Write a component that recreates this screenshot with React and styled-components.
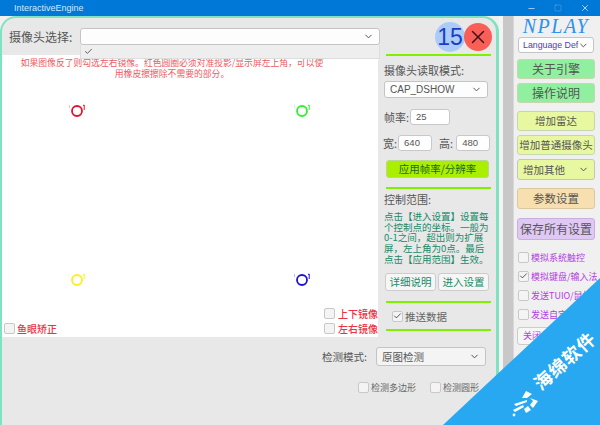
import React from 'react';
import styled, { createGlobalStyle } from 'styled-components';
import { Check, ChevronDown, X, Minus, Square } from 'lucide-react';

const CJK = '"Noto Sans CJK SC", "Noto Sans", sans-serif';

const GlobalStyle = createGlobalStyle`
    html, body { margin: 0; padding: 0; background: #f0f0f0; }
    * { box-sizing: border-box; }
`;

const Screen = styled.div`
    position: relative;
    width: 600px;
    height: 425px;
    overflow: hidden;
    display: flex;
    flex-direction: column;
    font-family: ${CJK};
    color: #555;
    background: #f0f0f0;
`;

const TitleBar = styled.div`
    height: 16px;
    flex: none;
    background: #0078d7;
    color: #d5e8f8;
    display: flex;
    align-items: center;
    padding-left: 14px;
    font: 9px "Liberation Sans", sans-serif;
`;

const TitleText = styled.span`
    flex: 1;
`;

const WinButtons = styled.div`
    display: flex;
    width: 90px;
    justify-content: space-between;
    align-items: center;
    padding: 0 10px 0 17px;
    color: #cfe4f6;
`;

const Body = styled.div`
    flex: 1;
    display: flex;
    min-height: 0;
`;

const MainPanel = styled.div`
    width: 499px;
    flex: none;
    border: 3px solid #7fe2c0;
    border-width: 2px 3px 0 2px;
    border-radius: 16px 16px 0 0;
    background: #e8e8e8;
    overflow: hidden;
    display: flex;
    flex-direction: column;
`;

const UpperRow = styled.div`
    display: flex;
    height: 319px;
    flex: none;
`;

const LeftCol = styled.div`
    width: 376px;
    flex: none;
    display: flex;
    flex-direction: column;
`;

const CameraBar = styled.div`
    position: relative;
    height: 37px;
    flex: none;
    display: flex;
    align-items: flex-start;
    padding: 10px 0 0 7px;
    gap: 8px;
`;

const CameraLabel = styled.span`
    font-size: 12px;
    line-height: 17px;
    color: #555;
    white-space: nowrap;
`;

const SelectBox = styled.div`
    display: flex;
    align-items: center;
    justify-content: space-between;
    width: ${p => p.$w}px;
    height: ${p => p.$h}px;
    margin-top: ${p => p.$mt || 0}px;
    margin-left: ${p => p.$ml || 0}px;
    padding: 0 ${p => p.$pad ?? 5}px;
    font-family: ${p => p.$latin ? '"Liberation Sans", sans-serif' : 'inherit'};
    font-size: ${p => p.$fs || 11}px;
    color: ${p => p.$color || '#555'};
    background: ${p => p.$bg || '#fdfdfd'};
    border: 1px solid #c4c4c4;
    border-radius: 3px;
    white-space: nowrap;
    flex: none;
`;

const CameraMenu = styled.div`
    position: absolute;
    left: 78px;
    top: 27px;
    width: 300px;
    height: 14px;
    background: #eee;
    border: 1px solid #ddd;
    border-top: 0;
    padding-left: 3px;
    color: #333;
    display: flex;
    align-items: center;
    z-index: 2;
`;

const Canvas = styled.div`
    position: relative;
    flex: 1;
    background: #fff;
    display: flex;
    flex-direction: column;
    justify-content: space-between;
`;

const Hint = styled.div`
    font-size: 8.8px;
    line-height: 11px;
    color: #ee5a5f;
    text-align: center;
    padding: 2px 53px 0 17px;
`;

const MarkerPin = styled.svg`
    position: absolute;
    left: ${p => p.$x}px;
    top: ${p => p.$y}px;
`;

const CanvasFooter = styled.div`
    display: flex;
    justify-content: space-between;
    align-items: flex-end;
    padding: 0 0 2px 2px;
`;

const MirrorCol = styled.div`
    display: flex;
    flex-direction: column;
    gap: 1px;
`;

const CheckRow = styled.label`
    display: flex;
    align-items: center;
    gap: ${p => p.$gap ?? 2}px;
    margin-left: ${p => p.$ml || 0}px;
    height: 14px;
    font-size: ${p => p.$fs || 9}px;
    font-weight: ${p => p.$bold ? 500 : 400};
    color: ${p => p.$color || '#666'};
    white-space: nowrap;
`;

const Tick = styled.span`
    width: 11px;
    height: 11px;
    flex: none;
    background: #f4f4f4;
    border: 1px solid #c8c8c8;
    border-radius: 2px;
    display: flex;
    align-items: center;
    justify-content: center;
    color: #222;
`;

const RightCol = styled.div`
    flex: 1;
    min-width: 0;
    display: flex;
    flex-direction: column;
    padding: 0 5px 0 6px;
`;

const BadgeRow = styled.div`
    height: 36px;
    flex: none;
    display: flex;
    justify-content: flex-end;
    align-items: flex-start;
    padding: 4px 0 0;
    margin-right: -1px;
`;

const Counter = styled.div`
    width: 30px;
    height: 30px;
    border-radius: 50%;
    background: #aaccf6;
    color: #1a3fc4;
    font: 23px/30px "Liberation Sans", sans-serif;
    text-align: center;
`;

const CloseBall = styled.div`
    width: 28px;
    height: 28px;
    margin: 1px 0 0 -1px;
    border-radius: 50%;
    background: #fa5f57;
    color: #401018;
    display: flex;
    align-items: center;
    justify-content: center;
`;

const Divider = styled.div`
    height: 2px;
    flex: none;
    margin: ${p => p.$mt || 0}px 0 ${p => p.$mb || 0}px 2px;
    background: #80f000;
`;

const SectionLabel = styled.div`
    font-size: 11px;
    line-height: 14px;
    color: #555;
    white-space: nowrap;
`;

const FieldRow = styled.div`
    display: flex;
    align-items: center;
    height: 16px;
    margin-top: ${p => p.$mt || 0}px;
    margin-left: ${p => p.$ml || 0}px;
    font-size: 11px;
    color: #555;
    white-space: nowrap;
`;

const FieldGap = styled.span`
    margin-left: 7px;
`;

const NumberInput = styled.div`
    width: ${p => p.$w}px;
    height: 16px;
    margin-left: ${p => p.$ml || 1}px;
    padding-left: 5px;
    font: 9.5px/14px "Liberation Sans", sans-serif;
    color: #555;
    background: #fff;
    border: 1px solid #c8c8c8;
    border-radius: 3px;
`;

const ApplyButton = styled.div`
    height: 18px;
    flex: none;
    margin: 9px 2px 0 2px;
    background: #aaee00;
    border: 1px solid #b8d890;
    border-radius: 3px;
    color: #206a20;
    font-size: 10.5px;
    line-height: 16px;
    text-align: center;
`;

const HelpText = styled.div`
    margin-top: 5px;
    font-size: 9.5px;
    line-height: 10.7px;
    color: #208a68;
    height: 62px;
`;

const ButtonPair = styled.div`
    display: flex;
    gap: 2px;
    margin: 0 2px 0 1px;
`;

const GhostButton = styled.div`
    flex: 1;
    height: 18px;
    background: #f6f6f6;
    border: 1px solid #ccc;
    border-radius: 3px;
    color: #208a68;
    font-size: 10.5px;
    line-height: 16px;
    text-align: center;
`;

const LowerArea = styled.div`
    flex: 1;
    display: flex;
    flex-direction: column;
    align-items: flex-end;
    padding: 10px 10px 0 0;
`;

const ModeRow = styled.div`
    display: flex;
    align-items: center;
    gap: 9px;
    font-size: 10.5px;
    color: #555;
`;

const DetectRow = styled.div`
    display: flex;
    gap: 14px;
    margin: 14px 7px 0 0;
`;

const Gutter = styled.div`
    width: 4px;
    flex: none;
    background: #f4f4f4;
`;

const ScrollTrack = styled.div`
    width: 10px;
    flex: none;
    background: #c8c8c8;
`;

const Sidebar = styled.div`
    flex: 1;
    min-width: 0;
    display: flex;
    flex-direction: column;
    padding: 0 5px 0 3px;
    border-left: 1px solid #d8d8d8;
`;

const Brand = styled.div`
    height: 21px;
    flex: none;
    text-align: center;
    font: italic 400 20px/21px "Liberation Serif", serif;
    letter-spacing: 1.5px;
    color: #2a92f0;
`;

const SideButton = styled.div`
    height: ${p => p.$h || 20}px;
    flex: none;
    margin-top: ${p => p.$mt || 0}px;
    background: ${p => p.$bg};
    border: 1px solid ${p => p.$line || '#c6d6b0'};
    border-radius: 3px;
    font-size: ${p => p.$fs || 12}px;
    line-height: ${p => (p.$h || 20) - 2}px;
    color: #555;
    text-align: center;
    white-space: nowrap;
`;

const SideChecks = styled.div`
    display: flex;
    flex-direction: column;
    gap: 5px;
    margin: 10px 0 0 1px;
`;

const StopButton = styled.div`
    height: 18px;
    flex: none;
    margin-top: 6px;
    padding-left: 5px;
    background: #f6f6f6;
    border: 1px solid #ccc;
    border-radius: 3px;
    color: #b040e0;
    font-size: 9px;
    line-height: 16px;
`;

const Ribbon = styled.div`
    position: absolute;
    inset: 0;
    background: #27a8f0;
    clip-path: polygon(443px 425px, 600px 278px, 600px 425px);
    z-index: 5;
`;

const RibbonText = styled.div`
    position: absolute;
    left: 526px;
    top: 350px;
    width: 76px;
    text-align: center;
    transform: rotate(-42deg);
    font-size: 18px;
    line-height: 20px;
    font-weight: 700;
    letter-spacing: 1px;
    color: #fff;
    white-space: nowrap;
    z-index: 6;
`;

const RibbonLogo = styled.svg`
    position: absolute;
    left: 510px;
    top: 388px;
    z-index: 6;
`;

const Marker = ({ x, y, color }) => (
    <MarkerPin $x={x} $y={y} width="20" height="20" viewBox="0 0 20 20">
        <circle cx="10" cy="11" r="5" fill="none" stroke={color} strokeWidth="1.8" />
        <path d="M16 5.5 L17.2 5 V10" fill="none" stroke={color} strokeWidth="1" />
        <path d="M2.5 5 V8" stroke={color} strokeOpacity="0.35" strokeWidth="0.8" />
    </MarkerPin>
);

const CheckItem = ({ checked, children, ...rest }) => (
    <CheckRow {...rest}>
        <Tick>{checked && <Check size={10} strokeWidth={2} />}</Tick>
        {children}
    </CheckRow>
);

const Chevron = () => <ChevronDown size={11} strokeWidth={2} color="#444" />;

const App = () => {
    return (
        <Screen>
            <GlobalStyle />
            <TitleBar>
                <TitleText>InteractiveEngine</TitleText>
                <WinButtons>
                    <Minus size={9} />
                    <Square size={8} strokeOpacity={0.35} />
                    <X size={10} />
                </WinButtons>
            </TitleBar>
            <Body>
                <MainPanel>
                    <UpperRow>
                        <LeftCol>
                            <CameraBar>
                                <CameraLabel>摄像头选择:</CameraLabel>
                                <SelectBox $w={300} $h={17}><span /><Chevron /></SelectBox>
                                <CameraMenu><Check size={9} strokeWidth={2} /></CameraMenu>
                            </CameraBar>
                            <Canvas>
                                <Hint>{'如果图像反了则勾选左右镜像。红色圆圈必须对准投影/显示屏左上角\uFF0C可以使用橡皮擦擦除不需要的部分。'}</Hint>
                                <Marker x={65} y={45} color="#e81030" />
                                <Marker x={290} y={45} color="#30f030" />
                                <Marker x={65} y={214} color="#f8f020" />
                                <Marker x={290} y={214} color="#2010d0" />
                                <CanvasFooter>
                                    <CheckItem $fs={10} $bold $color="#f03040">鱼眼矫正</CheckItem>
                                    <MirrorCol>
                                        <CheckItem $fs={10} $gap={3} $bold $color="#f03040">上下镜像</CheckItem>
                                        <CheckItem $fs={10} $gap={3} $bold $color="#f03040">左右镜像</CheckItem>
                                    </MirrorCol>
                                </CanvasFooter>
                            </Canvas>
                        </LeftCol>
                        <RightCol>
                            <BadgeRow>
                                <Counter>15</Counter>
                                <CloseBall><X size={22} strokeWidth={1.6} /></CloseBall>
                            </BadgeRow>
                            <Divider $mb={7} />
                            <SectionLabel>摄像头读取模式:</SectionLabel>
                            <SelectBox $w={104} $h={17} $fs={10} $mt={4} $latin>CAP_DSHOW<Chevron /></SelectBox>
                            <FieldRow $mt={11}>帧率:<NumberInput $w={40}>25</NumberInput></FieldRow>
                            <FieldRow $mt={10} $ml={-1}>
                                宽:<NumberInput $w={34}>640</NumberInput>
                                <FieldGap>高:</FieldGap><NumberInput $w={34} $ml={3}>480</NumberInput>
                            </FieldRow>
                            <ApplyButton>应用帧率/分辨率</ApplyButton>
                            <Divider $mt={9} $mb={3} />
                            <SectionLabel>控制范围:</SectionLabel>
                            <HelpText>{'点击【进入设置】设置每个控制点的坐标。一般为0-1之间\uFF0C超出则为扩展屏\uFF0C左上角为0点。最后点击【应用范围】生效。'}</HelpText>
                            <ButtonPair>
                                <GhostButton>详细说明</GhostButton>
                                <GhostButton>进入设置</GhostButton>
                            </ButtonPair>
                            <Divider $mt={10} $mb={6} />
                            <CheckItem checked $fs={10.5} $ml={8}>推送数据</CheckItem>
                            <Divider $mt={6} />
                        </RightCol>
                    </UpperRow>
                    <LowerArea>
                        <ModeRow>
                            检测模式:
                            <SelectBox $w={110} $h={19} $fs={10.5} $bg="#f4f4f4">原图检测<Chevron /></SelectBox>
                        </ModeRow>
                        <DetectRow>
                            <CheckItem>检测多边形</CheckItem>
                            <CheckItem>检测圆形</CheckItem>
                        </DetectRow>
                    </LowerArea>
                </MainPanel>
                <Gutter />
                <ScrollTrack />
                <Sidebar>
                    <Brand>NPLAY</Brand>
                    <SelectBox $w={76} $h={16} $ml={1} $pad={4} $fs={8.8} $color="#5040b0" $latin>Language Def<Chevron /></SelectBox>
                    <SideButton $mt={6} $bg="#90f0a0">关于引擎</SideButton>
                    <SideButton $mt={4} $bg="#90f0a0">操作说明</SideButton>
                    <SideButton $mt={8} $bg="#e8f8a0" $fs={10.5}>增加雷达</SideButton>
                    <SideButton $mt={4} $bg="#e8f8a0" $fs={10.5}>增加普通摄像头</SideButton>
                    <SelectBox $w={78} $h={21} $mt={4} $fs={10.5} $bg="#e8f8a0">增加其他<Chevron /></SelectBox>
                    <SideButton $mt={8} $h={21} $bg="#f8dfb0" $line="#dcc8a0" $fs={11.5}>参数设置</SideButton>
                    <SideButton $mt={9} $h={22} $bg="#e0c8f5" $line="#c8b0dc">保存所有设置</SideButton>
                    <SideChecks>
                        <CheckItem $color="#b040e0">模拟系统触控</CheckItem>
                        <CheckItem checked $color="#b040e0">模拟键盘/输入法</CheckItem>
                        <CheckItem $color="#b040e0">发送TUIO/鼠标</CheckItem>
                        <CheckItem $color="#b040e0">发送自定义</CheckItem>
                    </SideChecks>
                    <StopButton>关闭</StopButton>
                </Sidebar>
            </Body>
            <Ribbon />
            <RibbonText>海绵软件</RibbonText>
            <RibbonLogo width="30" height="30" viewBox="0 0 30 30" fill="#fff">
                <path d="M16 3 L22 6 L17 10 L12 10 Z" />
                <path d="M20 10 L28 13 L23 20 L20 17 L23 13 Z" />
                <path d="M4 16 L17 12 L17 14 L6 18 Z" />
                <path d="M3 22 L13 17 L14 19 L5 24 Z" />
                <path d="M14 21 L18 18 L21 22 L16 25 Z" />
                <circle cx="4" cy="27" r="1.4" />
            </RibbonLogo>
        </Screen>
    );
};

export default App;
